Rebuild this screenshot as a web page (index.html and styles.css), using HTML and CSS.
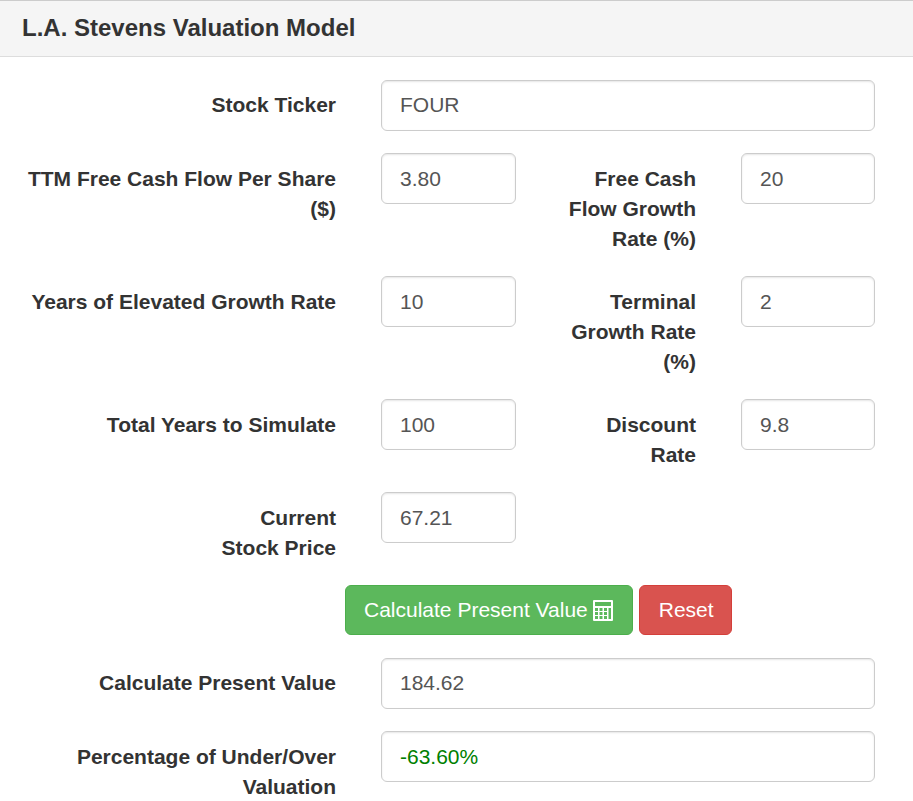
FILE: index.html
```html
<!DOCTYPE html>
<html lang="en">
<head>
<meta charset="utf-8">
<title>L.A. Stevens Valuation Model</title>
<link rel="stylesheet" href="styles.css">
</head>
<body>
<section class="panel">
  <h1 class="panel-heading">L.A. Stevens Valuation Model</h1>
  <form class="panel-body">
    <div class="row row-wide row-raised">
      <label class="label">Stock Ticker</label>
      <input class="field" type="text" value="FOUR">
    </div>
    <div class="row">
      <label class="label">TTM Free Cash Flow Per Share ($)</label>
      <input class="field" type="text" value="3.80">
      <label class="label">Free Cash Flow Growth Rate (%)</label>
      <input class="field" type="text" value="20">
    </div>
    <div class="row">
      <label class="label">Years of Elevated Growth Rate</label>
      <input class="field" type="text" value="10">
      <label class="label">Terminal Growth Rate (%)</label>
      <input class="field" type="text" value="2">
    </div>
    <div class="row">
      <label class="label">Total Years to Simulate</label>
      <input class="field" type="text" value="100">
      <label class="label">Discount Rate</label>
      <input class="field" type="text" value="9.8">
    </div>
    <div class="row">
      <label class="label">Current<br>Stock Price</label>
      <input class="field" type="text" value="67.21">
    </div>
    <div class="actions">
      <button class="btn btn-success" type="button">Calculate Present Value
        <svg class="icon" viewBox="0 0 20 21" width="20" height="21" aria-hidden="true">
          <path fill="#fff" fill-rule="evenodd" d="M0 1A1 1 0 0 1 1 0h18a1 1 0 0 1 1 1v19a1 1 0 0 1-1 1H1a1 1 0 0 1-1-1zM2 2v4h16V2zM2 8v3h3V8zM6.500 8v3h3V8zM11 8v3h3V8zM15.500 8v11H18V8zM2 12v3h3v-3zM6.500 12v3h3v-3zM11 12v3h3v-3zM2 16v3h3v-3zM6.500 16v3h3v-3zM11 16v3h3v-3z"/>
        </svg>
      </button>
      <button class="btn btn-danger" type="reset">Reset</button>
    </div>
    <div class="row row-wide row-raised">
      <label class="label">Calculate Present Value</label>
      <input class="field" type="text" value="184.62">
    </div>
    <div class="row row-wide">
      <label class="label">Percentage of Under/Over Valuation</label>
      <input class="field field-green" type="text" value="-63.60%">
    </div>
  </form>
</section>
</body>
</html>
```
FILE: styles.css
```css
* { box-sizing: border-box; }
html, body { margin: 0; height: 100%; overflow: hidden; }
body {
  background: #fff;
  color: #333;
  font-family: "Liberation Sans", Arial, sans-serif;
  font-size: 21px;
  line-height: 30px;
}
.panel-heading {
  margin: 0;
  height: 57px;
  padding: 12px 22px 0;
  background: #f5f5f5;
  border-top: 1px solid #ccc;
  border-bottom: 1px solid #ddd;
  font-size: 24px;
  font-weight: 700;
  line-height: 30px;
}
.panel-body { padding: 23px 38px 0 22px; }
.row {
  display: grid;
  grid-template-columns: 314px 135px 135px 134px;
  column-gap: 45px;
  align-items: start;
  margin-bottom: 22px;
}
.row-wide { grid-template-columns: 314px 494px; }
.label {
  padding-top: 11px;
  font-weight: 700;
  text-align: right;
}
.field {
  width: 100%;
  height: 51px;
  padding: 0 19px 0 18px;
  border: 1px solid #ccc;
  border-radius: 6px;
  box-shadow: inset 0 1px 2px rgba(0, 0, 0, .1);
  background: #fff;
  color: #555;
  font: inherit;
}
.row-raised .label { padding-top: 10px; }
.row-raised .field { padding-bottom: 2px; }
.field-green { color: green; }
.actions {
  display: flex;
  gap: 6px;
  margin-bottom: 23px;
  padding-left: 323px;
}
.btn {
  display: inline-flex;
  align-items: center;
  gap: 5px;
  height: 50px;
  padding: 0 18px;
  border: 1px solid;
  border-radius: 6px;
  color: #fff;
  font: inherit;
}
.btn-success { padding-right: 19px; background: #5cb85c; border-color: #4cae4c; }
.btn-danger { padding: 0 17px 0 19px; background: #d9534f; border-color: #d43f3a; }
.icon { flex: none; }
```
